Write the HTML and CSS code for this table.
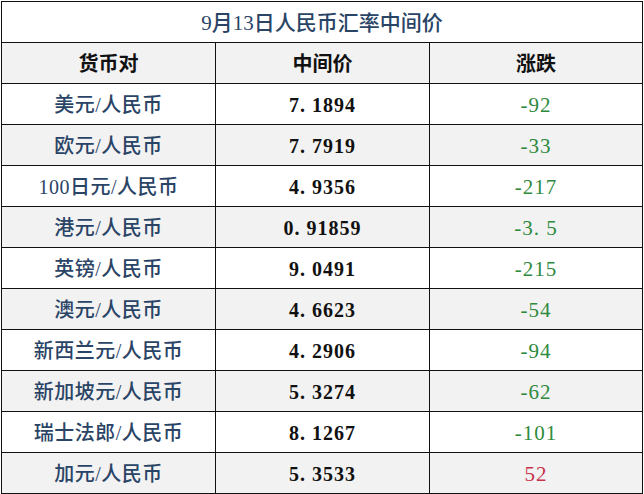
FILE: index.html
```html
<!DOCTYPE html>
<html lang="zh-CN">
<head>
<meta charset="utf-8">
<title>9月13日人民币汇率中间价</title>
<link rel="stylesheet" href="styles.css">
</head>
<body>
<div class="table">
  <div class="cell title">9月13日人民币汇率中间价</div>
  <div class="cell head">货币对</div>
  <div class="cell head">中间价</div>
  <div class="cell head">涨跌</div>

  <div class="cell pair">美元/人民币</div><div class="cell rate">7. 1894</div><div class="cell chg down">-92</div>
  <div class="cell pair alt">欧元/人民币</div><div class="cell rate alt">7. 7919</div><div class="cell chg down alt">-33</div>
  <div class="cell pair">100日元/人民币</div><div class="cell rate">4. 9356</div><div class="cell chg down">-217</div>
  <div class="cell pair alt">港元/人民币</div><div class="cell rate alt">0. 91859</div><div class="cell chg down alt">-3. 5</div>
  <div class="cell pair">英镑/人民币</div><div class="cell rate">9. 0491</div><div class="cell chg down">-215</div>
  <div class="cell pair alt">澳元/人民币</div><div class="cell rate alt">4. 6623</div><div class="cell chg down alt">-54</div>
  <div class="cell pair">新西兰元/人民币</div><div class="cell rate">4. 2906</div><div class="cell chg down">-94</div>
  <div class="cell pair alt">新加坡元/人民币</div><div class="cell rate alt">5. 3274</div><div class="cell chg down alt">-62</div>
  <div class="cell pair">瑞士法郎/人民币</div><div class="cell rate">8. 1267</div><div class="cell chg down">-101</div>
  <div class="cell pair alt">加元/人民币</div><div class="cell rate alt">5. 3533</div><div class="cell chg up alt">52</div>
</div>
</body>
</html>
```

FILE: styles.css
```css
html, body {
  margin: 0;
  padding: 0;
  background: #ffffff;
}
body {
  padding: 1px 0 0 1px;
  font-family: "Liberation Serif", "Noto Sans CJK SC", serif;
}
.table {
  display: grid;
  grid-template-columns: 214px 214px 213px;
  grid-auto-rows: 41px;
  width: 641px;
  border-left: 1px solid #111;
  border-top: 1px solid #111;
  box-sizing: content-box;
}
.cell {
  display: flex;
  align-items: center;
  justify-content: center;
  padding-top: 2px;
  box-sizing: border-box;
  border-right: 1px solid #111;
  border-bottom: 1px solid #111;
  font-size: 20px;
  line-height: 1;
  white-space: nowrap;
}
.title {
  grid-column: 1 / 4;
  color: #2a4466;
  font-size: 21px;
  font-weight: 500;
  background: #ffffff;
}
.head {
  background: #f2f2f2;
  color: #111;
  font-weight: 700;
}
.pair {
  color: #2a4466;
  font-weight: 500;
  letter-spacing: 0.5px;
}
.rate {
  color: #111;
  font-weight: 700;
  letter-spacing: 1px;
}
.chg {
  font-size: 21px;
  letter-spacing: 1px;
}
.down {
  color: #2f8a3e;
}
.up {
  color: #c8324c;
}
.alt {
  background: #f2f2f2;
}
```
